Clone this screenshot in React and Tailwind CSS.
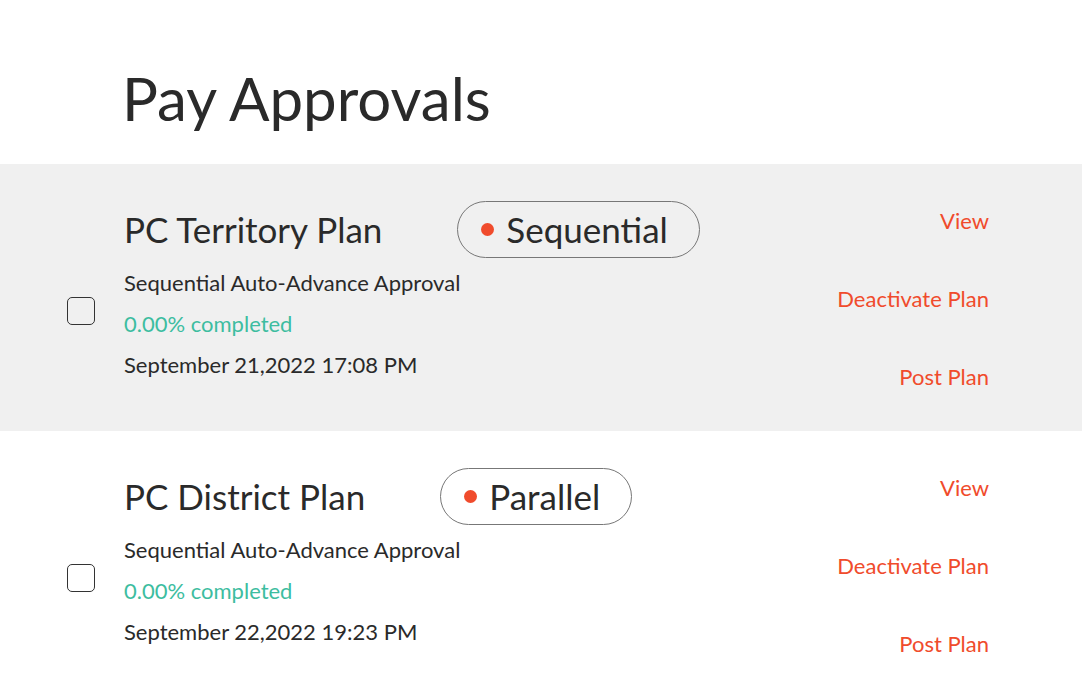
import React from "react";

const plans = [
  { name: "PC Territory Plan", type: "Sequential", date: "September 21,2022 17:08 PM", shaded: true },
  { name: "PC District Plan", type: "Parallel", date: "September 22,2022 19:23 PM", shaded: false },
];

function Card({ p }) {
  return (
    <div className={`flex items-start h-[267px] pl-[67px] pr-[93px] pt-[37px] ${p.shaded ? "bg-[#f0f0f0]" : "bg-white"}`}>
      <div className="mt-[96px] w-[28px] h-[28px] rounded-[5px] border border-[#333] shrink-0" />
      <div className="ml-[29px] flex flex-col flex-1">
        <div className="flex items-center h-[57px]">
          <span className="text-[35px] leading-none text-[#2a2a2a]">{p.name}</span>
          <span className="ml-[75px] h-[57px] flex items-center rounded-full border border-[#777] pl-[23px] pr-[31px]">
            <span className="w-[13px] h-[13px] rounded-full bg-[#f04b2c]" />
            <span className="ml-[12px] text-[35px] leading-none text-[#2a2a2a]">{p.type}</span>
          </span>
        </div>
        <div className="mt-[4px] text-[22px] leading-[41px] text-[#2a2a2a]">Sequential Auto-Advance Approval</div>
        <div className="text-[22px] leading-[41px] text-[#3dbda0]">0.00% completed</div>
        <div className="text-[22px] leading-[41px] text-[#2a2a2a]">{p.date}</div>
      </div>
      <div className="mt-[8px] flex flex-col items-end gap-[54px] text-[22px] leading-[24px] text-[#f04b2c]">
        <span>View</span>
        <span>Deactivate Plan</span>
        <span>Post Plan</span>
      </div>
    </div>
  );
}

export default function App() {
  return (
    <div className="w-[1082px] h-[699px] overflow-hidden bg-white" style={{ fontFamily: "Lato, 'Noto Sans', sans-serif" }}>
      <div className="h-[164px] pl-[122px] pt-[62px]">
        <h1 className="text-[60px] leading-[72px] text-[#2a2a2a]">Pay Approvals</h1>
      </div>
      {plans.map((p) => (
        <Card key={p.name} p={p} />
      ))}
    </div>
  );
}
